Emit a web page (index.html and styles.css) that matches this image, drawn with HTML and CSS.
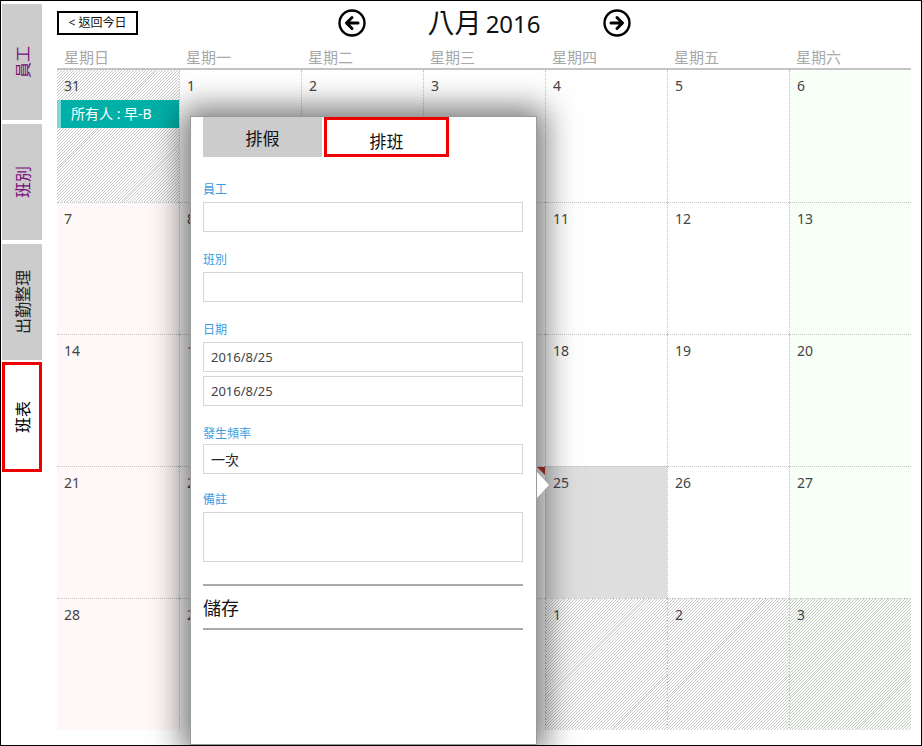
FILE: index.html
```html
<!DOCTYPE html>
<html lang="zh-Hant">
<head>
  <meta charset="UTF-8" />
  <meta name="viewport" content="width=device-width, initial-scale=1" />
  <title>班表</title>
  <link rel="stylesheet" href="styles.css">
</head>
<body>
  <div class="app">
    <nav class="sidebar">
      <a class="side-tab visited" href="#"><span>員工</span></a>
      <a class="side-tab visited" href="#"><span>班別</span></a>
      <a class="side-tab" href="#"><span>出勤整理</span></a>
      <a class="side-tab active" href="#"><span>班表</span></a>
    </nav>

    <main class="main">
      <div class="toolbar">
        <button class="today-btn">&lt; 返回今日</button>
        <div class="month-nav">
          <button class="arrow-btn" aria-label="上個月">
            <svg width="30" height="30" viewBox="0 0 30 30">
              <circle cx="15" cy="15" r="12.5" fill="none" stroke="#000" stroke-width="2.4" />
              <path d="M21 15H10M15 9.5L9.5 15L15 20.5" fill="none" stroke="#000" stroke-width="3" stroke-linecap="round" stroke-linejoin="round" />
            </svg>
          </button>
          <div class="month-title"><span class="month-name">八月</span> <span class="year">2016</span></div>
          <button class="arrow-btn" aria-label="下個月">
            <svg width="30" height="30" viewBox="0 0 30 30">
              <circle cx="15" cy="15" r="12.5" fill="none" stroke="#000" stroke-width="2.4" />
              <path d="M9 15H20M15 9.5L20.5 15L15 20.5" fill="none" stroke="#000" stroke-width="3" stroke-linecap="round" stroke-linejoin="round" />
            </svg>
          </button>
        </div>
      </div>

      <div class="weekdays">
        <div>星期日</div><div>星期一</div><div>星期二</div><div>星期三</div><div>星期四</div><div>星期五</div><div>星期六</div>
      </div>

      <div class="weeks">
        <!-- week 1 -->
        <div class="day sun other"><span class="num">31</span>
          <div class="event">所有人 : 早-B</div>
        </div>
        <div class="day"><span class="num">1</span></div>
        <div class="day"><span class="num">2</span></div>
        <div class="day"><span class="num">3</span></div>
        <div class="day"><span class="num">4</span></div>
        <div class="day"><span class="num">5</span></div>
        <div class="day sat"><span class="num">6</span></div>
        <!-- week 2 -->
        <div class="day sun"><span class="num">7</span></div>
        <div class="day"><span class="num">8</span></div>
        <div class="day"><span class="num">9</span></div>
        <div class="day"><span class="num">10</span></div>
        <div class="day"><span class="num">11</span></div>
        <div class="day"><span class="num">12</span></div>
        <div class="day sat"><span class="num">13</span></div>
        <!-- week 3 -->
        <div class="day sun"><span class="num">14</span></div>
        <div class="day"><span class="num">15</span></div>
        <div class="day"><span class="num">16</span></div>
        <div class="day"><span class="num">17</span></div>
        <div class="day"><span class="num">18</span></div>
        <div class="day"><span class="num">19</span></div>
        <div class="day sat"><span class="num">20</span></div>
        <!-- week 4 -->
        <div class="day sun"><span class="num">21</span></div>
        <div class="day"><span class="num">22</span></div>
        <div class="day"><span class="num">23</span></div>
        <div class="day today"><span class="num">24</span></div>
        <div class="day selected"><span class="num">25</span></div>
        <div class="day"><span class="num">26</span></div>
        <div class="day sat"><span class="num">27</span></div>
        <!-- week 5 -->
        <div class="day sun"><span class="num">28</span></div>
        <div class="day"><span class="num">29</span></div>
        <div class="day"><span class="num">30</span></div>
        <div class="day"><span class="num">31</span></div>
        <div class="day other"><span class="num">1</span></div>
        <div class="day other"><span class="num">2</span></div>
        <div class="day sat other"><span class="num">3</span></div>
      </div>
    </main>

    <!-- edit popup for the selected day -->
    <div class="popup">
      <div class="popup-tabs">
        <button class="popup-tab">排假</button>
        <button class="popup-tab current">排班</button>
      </div>

      <label class="field-label first">員工</label>
      <input class="field" type="text" />

      <label class="field-label">班別</label>
      <input class="field" type="text" />

      <label class="field-label">日期</label>
      <input class="field" type="text" value="2016/8/25" />
      <input class="field date-end" type="text" value="2016/8/25" />

      <label class="field-label freq">發生頻率</label>
      <input class="field freq-input" type="text" value="一次" />

      <label class="field-label note">備註</label>
      <textarea class="field note-input"></textarea>

      <button class="save-btn">儲存</button>
    </div>
  </div>
</body>
</html>
```

FILE: styles.css
```css
:root {
  --side-bg: #cccccc;
  --line: #c4c4c4;
  --muted: #a8a8a8;
  --text: #333333;
  --label: #3d9be0;
  --accent: #ee0000;
  --teal: #00b0a8;
}
* {
  box-sizing: border-box;
}
body {
  margin: 0;
  font-family: "Noto Sans", "Noto Sans CJK TC", sans-serif;
  color: var(--text);
  background: #fff;
}
button {
  font-family: inherit;
  cursor: pointer;
}
.app {
  position: relative;
  display: flex;
  width: 922px;
  height: 746px;
  border: 1px solid #000;
  overflow: hidden;
}

/* left tabs */
.sidebar {
  width: 41px;
  padding: 3px 0 0 1px;
  display: flex;
  flex-direction: column;
  gap: 4px;
}
.side-tab {
  height: 116px;
  background: var(--side-bg);
  display: flex;
  align-items: center;
  justify-content: center;
  text-decoration: none;
  color: #222;
  font-size: 16px;
}
.side-tab span {
  writing-mode: vertical-rl;
  text-orientation: sideways;
  transform: rotate(180deg);
}
.side-tab.visited {
  color: #7a0f7a;
}
.side-tab.active {
  height: 110px;
  margin-top: -2px;
  background: #fff;
  border: 3px solid var(--accent);
  color: #000;
}

/* calendar */
.main {
  flex: 1;
  padding: 0 10px 0 15px;
}
.toolbar {
  height: 45px;
  display: grid;
  grid-template-columns: 1fr auto 1fr;
  align-items: start;
}
.today-btn {
  margin-top: 10px;
  width: 81px;
  height: 24px;
  padding: 0;
  border: 2px solid #000;
  background: #fff;
  font-size: 12px;
  line-height: 18px;
  color: #111;
}
.month-nav {
  display: flex;
  align-items: center;
  height: 44px;
}
.arrow-btn {
  width: 30px;
  height: 30px;
  padding: 0;
  border: none;
  background: none;
  display: flex;
}
.month-title {
  width: 235px;
  margin-top: -3px;
  text-align: center;
  color: #111;
  white-space: nowrap;
}
.month-name {
  font-size: 27px;
}
.year {
  font-size: 24px;
}
.weekdays {
  display: grid;
  grid-template-columns: repeat(7, 122px);
  height: 24px;
  border-bottom: 2px solid var(--line);
}
.weekdays div {
  padding-left: 7px;
  font-size: 15px;
  line-height: 22px;
  color: var(--muted);
}
.weeks {
  display: grid;
  grid-template-columns: repeat(7, 122px);
  grid-template-rows: repeat(5, 132px);
}
.day {
  position: relative;
  padding: 8px 7px;
  border-left: 1px dotted var(--line);
  border-top: 1px dotted var(--line);
  font-size: 14px;
  line-height: 16px;
}
.day:nth-child(7n + 1) {
  border-left: none;
}
.day:nth-child(-n + 7) {
  border-top: none;
}
.day.sun {
  background: #fff8f8;
}
.day.sat {
  background: #f7fff7;
}
.day.selected {
  background: #dedede;
}
.day.other {
  background: repeating-linear-gradient(135deg, #ffffff 0 1.4px, #c9c9c9 1.4px 2.1px);
}
.day.sat.other {
  background: repeating-linear-gradient(135deg, #f8fdf8 0 1.4px, #c6cbc6 1.4px 2.1px);
}
.day.today::after {
  content: "";
  position: absolute;
  top: 0;
  right: 0;
  border-top: 8px solid #c03030;
  border-left: 8px solid transparent;
}
.num {
  color: #444;
}
.event {
  margin: 6px -7px 0;
  height: 28px;
  padding-left: 10px;
  background: var(--teal);
  border-left: 4px solid #7fd8d3;
  color: #fff;
  font-size: 14px;
  line-height: 28px;
}

/* popup */
.popup {
  position: absolute;
  left: 189px;
  top: 115px;
  width: 347px;
  height: 629px;
  padding: 0 12px;
  background: #fff;
  border: 1px solid #9a9a9a;
  box-shadow: 0 0 30px 8px rgba(0, 0, 0, 0.55);
}
.popup::after {
  content: "";
  position: absolute;
  top: 355px;
  right: -13px;
  border-left: 12px solid #fff;
  border-top: 13px solid transparent;
  border-bottom: 13px solid transparent;
}
.popup-tabs {
  display: flex;
  gap: 2px;
}
.popup-tab {
  width: 119px;
  height: 40px;
  padding: 0;
  border: none;
  background: var(--side-bg);
  font-size: 17px;
  color: #111;
}
.popup-tab.current {
  width: 125px;
  padding-top: 6px;
  background: #fff;
  border: 3px solid var(--accent);
}
.field-label {
  display: block;
  height: 16px;
  margin-top: 20px;
  margin-bottom: 4px;
  font-size: 12px;
  line-height: 16px;
  color: var(--label);
}
.field-label.first {
  margin-top: 25px;
}
.field-label.freq {
  margin-bottom: 2px;
}
.field-label.note {
  margin-top: 18px;
}
.field {
  display: block;
  width: 320px;
  height: 30px;
  padding: 0 7px;
  border: 1px solid #d6d6d6;
  font-family: inherit;
  font-size: 13px;
  color: #444;
  outline: none;
}
.date-end {
  margin-top: 4px;
}
.freq-input {
  font-size: 14px;
  color: #222;
}
.note-input {
  height: 50px;
  resize: none;
}
.save-btn {
  display: block;
  width: 320px;
  height: 46px;
  margin-top: 22px;
  padding: 0;
  border: none;
  border-top: 2px solid #aaa;
  border-bottom: 2px solid #aaa;
  background: #fff;
  text-align: left;
  font-size: 18px;
  color: #111;
}
```
